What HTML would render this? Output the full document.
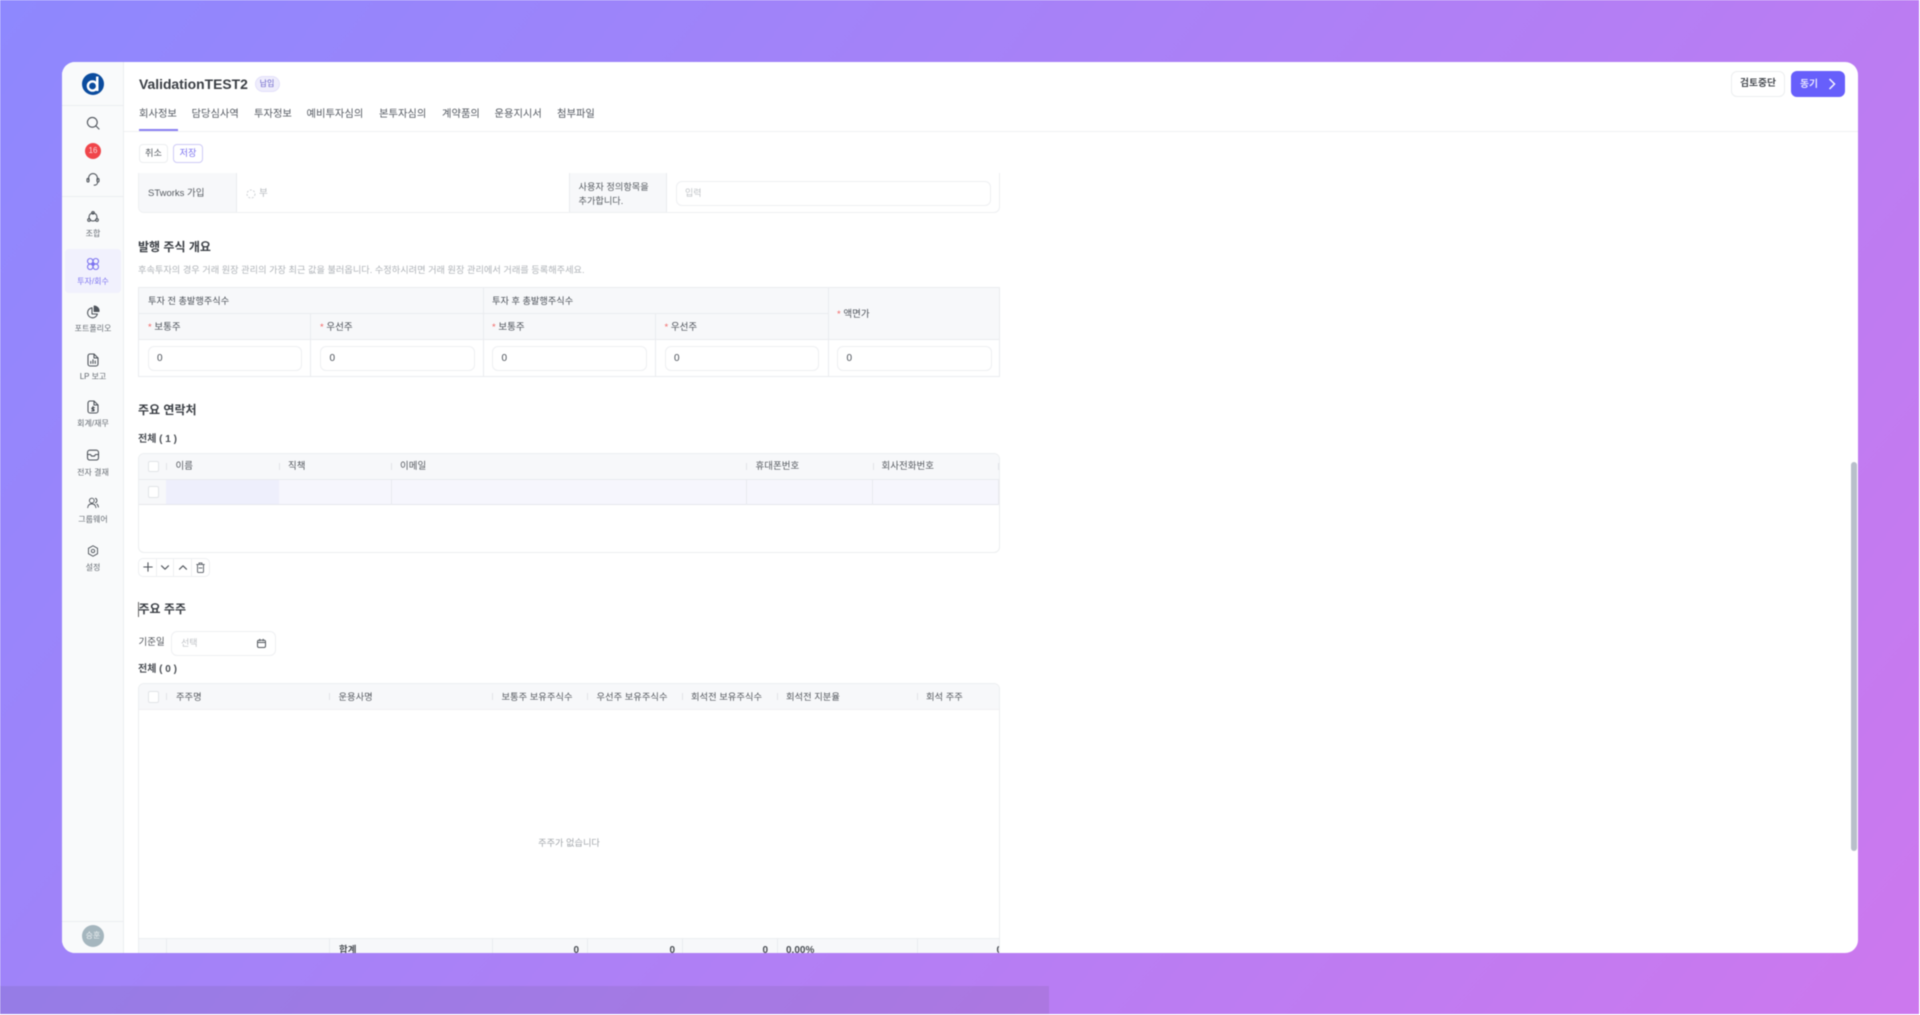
<!DOCTYPE html>
<html lang="ko"><head><meta charset="utf-8"><title>ValidationTEST2</title>
<style>
html,body{margin:0;padding:0;width:1920px;height:1015px;overflow:hidden;background:#fff}
*{box-sizing:border-box}
#bg{position:absolute;left:0;top:0;width:1919px;height:1014px;background:linear-gradient(127deg,#8e88fe,#cd78ee);overflow:hidden;filter:blur(.45px)}
#strip{position:absolute;left:0;top:986px;width:1049px;height:28px;background:rgba(70,70,70,.1)}
#card{position:absolute;left:62px;top:62px;width:1796px;height:891px;background:#fff;border-radius:13px;overflow:hidden}
#in{position:absolute;left:-62px;top:-62px;width:1920px;height:1015px;font-family:"Liberation Sans","Noto Sans CJK KR",sans-serif;color:#4b5058;font-size:9.5px}
.t{position:absolute;line-height:14px;white-space:nowrap;margin-top:1px}
.b{position:absolute}
.c{transform:translateX(-50%);text-align:center}
.side{font-size:8px;color:#62686f}
.tab{font-size:10.3px;top:107px;color:#555a62}
.h{font-weight:700;font-size:12px;color:#3a3e44}
.in{position:absolute;background:#fff;border:1px solid #eef0f2;border-radius:6px}
.red{color:#f26a6a}
svg{position:absolute;overflow:visible}
svg.i{fill:none;stroke:#4f545b;stroke-width:1.1;stroke-linecap:round;stroke-linejoin:round}
.sep{position:absolute;width:1px;height:7px;background:#e2e4e8}
.v{position:absolute;width:1px;background:#eaecef}
.hl{position:absolute;height:1px;background:#eaecef}
.ck{position:absolute;width:11.5px;height:11.5px;background:#fff;border:1px solid #e2e4e8;border-radius:2px}
.th{top:458.500px;color:#55595f}
.th2{top:689px;color:#55595f;font-size:9.3px}
.f{font-weight:700;color:#4a4e54;font-size:10px}
.s{font-size:9.2px}
</style></head><body>
<div id="bg">
<div id="strip"></div>
<div id="card"><div id="in">

<!-- sidebar -->
<div class="b" style="left:62px;top:62px;width:62px;height:891px;background:#f9fafb;border-right:1px solid #eceef0"></div>
<div class="hl" style="left:62px;top:105px;width:62px;background:#eceef0"></div>
<div class="hl" style="left:62px;top:196px;width:62px;background:#eceef0"></div>
<div class="hl" style="left:62px;top:921px;width:62px;background:#eceef0"></div>
<svg style="left:82px;top:73px" width="22" height="22" viewBox="0 0 22 22"><circle cx="11" cy="11" r="11" fill="#0b4c9e"/><circle cx="10.500" cy="13" r="4.600" fill="none" stroke="#fff" stroke-width="2.400"/><rect x="14" y="3.500" width="2.500" height="14.500" fill="#fff"/></svg>
<svg class="i" style="left:86px;top:116px" width="14" height="14" viewBox="0 0 14 14"><circle cx="6.300" cy="6.300" r="4.900"/><path d="M10 10l3 3"/></svg>
<div class="b" style="left:85px;top:143px;width:16px;height:16px;border-radius:8px;background:#f0454a;color:#fbd9da;font-size:8px;line-height:16px;text-align:center">16</div>
<svg class="i" style="left:86px;top:172px" width="14" height="14" viewBox="0 0 14 14"><path d="M2.600 8V6a4.400 4.400 0 0 1 8.800 0v2"/><rect x="1" y="6.400" width="2" height="3.600" rx="1"/><rect x="11" y="6.400" width="2" height="3.600" rx="1"/><path d="M11.600 10.200c0 1.800-1.400 3-3.400 3"/></svg>

<svg class="i" style="left:86px;top:210px" width="14" height="14" viewBox="0 0 14 14"><circle cx="7" cy="7" r="4"/><circle cx="7" cy="2.800" r="1.300"/><circle cx="3" cy="10" r="1.300"/><circle cx="11" cy="10" r="1.300"/></svg>
<div class="t side c" style="left:93px;top:225.500px">조합</div>

<div class="b" style="left:64.500px;top:249px;width:56.500px;height:44px;background:#f1f1fd;border-radius:4px"></div>
<svg class="i" style="left:86px;top:257px;stroke:#7d74f0" width="14" height="14" viewBox="0 0 14 14"><circle cx="4.200" cy="4.200" r="2.700"/><circle cx="9.800" cy="4.200" r="2.700"/><circle cx="4.200" cy="9.800" r="2.700"/><circle cx="9.800" cy="9.800" r="2.700"/><circle cx="7" cy="7" r="1.200" fill="#7d74f0"/></svg>
<div class="t side c" style="left:93px;top:273.500px;color:#7d74f0">투자/회수</div>

<svg class="i" style="left:86px;top:305px" width="14" height="14" viewBox="0 0 14 14"><path d="M6 2.800a5 5 0 1 0 5.400 6.200H6z"/><path d="M8.200 1a5 5 0 0 1 4.800 5.400H8.200z" fill="#4f545b"/></svg>
<div class="t side c" style="left:93px;top:320.500px">포트폴리오</div>

<svg class="i" style="left:87px;top:353px" width="12" height="14" viewBox="0 0 12 14"><path d="M1 3a2 2 0 0 1 2-2h4l4 4v6a2 2 0 0 1-2 2H3a2 2 0 0 1-2-2z"/><path d="M7 1v4h4M3.800 10.400V8.400M6 10.400V6.800M8.200 10.400V8"/></svg>
<div class="t side c" style="left:93px;top:369px">LP 보고</div>

<svg class="i" style="left:87px;top:400px" width="12" height="14" viewBox="0 0 12 14"><path d="M1 3a2 2 0 0 1 2-2h4l4 4v6a2 2 0 0 1-2 2H3a2 2 0 0 1-2-2z"/><path d="M7 1v4h4M6 6.500v4.500M7.400 7.600H5.400a.9.9 0 0 0 0 1.700h1.200a.9.9 0 0 1 0 1.700H4.600"/></svg>
<div class="t side c" style="left:93px;top:416px">회계/재무</div>

<svg class="i" style="left:86px;top:448px" width="14" height="14" viewBox="0 0 14 14"><rect x="1.500" y="2.200" width="11" height="9.800" rx="2.200"/><path d="M1.500 6.500h3l1 1.600h3l1-1.600h3"/></svg>
<div class="t side c" style="left:93px;top:464.500px">전자 결재</div>

<svg class="i" style="left:87px;top:497px" width="12" height="12" viewBox="0 0 14 14"><circle cx="5.600" cy="4.200" r="2.800"/><path d="M.8 12.400c.4-3 2.400-4.400 4.800-4.400s4.400 1.400 4.800 4.400M9.800 1.600a2.800 2.800 0 0 1 0 5.200M11.600 8.400c1 .6 1.500 2 1.700 3.400"/></svg>
<div class="t side c" style="left:93px;top:512px">그룹웨어</div>

<svg class="i" style="left:87px;top:545px" width="12" height="12" viewBox="0 0 14 14"><path d="M7 .9l5.300 3v6.200L7 13.100l-5.300-3V3.900z"/><circle cx="7" cy="7" r="2"/></svg>
<div class="t side c" style="left:93px;top:560px">설정</div>

<div class="b" style="left:82px;top:925px;width:22px;height:22px;border-radius:11px;background:#a5b6be;color:#eef2f4;font-size:8px;line-height:22px;text-align:center">승훈</div>

<!-- header -->
<div class="t" style="left:139px;top:75px;font-size:13.900px;font-weight:700;color:#3a3e44;line-height:16px">ValidationTEST2</div>
<div class="b" style="left:254.500px;top:76px;width:25px;height:15.500px;border-radius:8px;background:#efedfc;border:1px solid #e3e0fa;color:#6a63c8;font-size:8px;line-height:13.500px;text-align:center">납입</div>
<div class="t tab" style="left:139px">회사정보</div>
<div class="t tab" style="left:191.500px">담당심사역</div>
<div class="t tab" style="left:254px">투자정보</div>
<div class="t tab" style="left:306.500px">예비투자심의</div>
<div class="t tab" style="left:379px">본투자심의</div>
<div class="t tab" style="left:442px">계약품의</div>
<div class="t tab" style="left:494.500px">운용지시서</div>
<div class="t tab" style="left:557px">첨부파일</div>
<div class="b" style="left:138.500px;top:128.500px;width:39px;height:2px;background:#8a80f2"></div>
<div class="hl" style="left:124px;top:130.500px;width:1734px;background:#f0f1f3;height:1px"></div>

<div class="b" style="left:1731px;top:71px;width:54px;height:25.500px;border:1px solid #eceef0;border-radius:6px;background:#fff;text-align:center;line-height:23.500px;font-size:9.800px;font-weight:700;color:#484c52">검토중단</div>
<div class="b" style="left:1791px;top:71px;width:53.500px;height:25.500px;border-radius:6px;background:#675ffb"></div>
<div class="t" style="left:1800px;top:76.500px;color:#e6e4ff;font-size:9.800px;font-weight:700">동기</div>
<svg style="left:1828px;top:78px;fill:none;stroke:#f4f3ff;stroke-width:1.500" width="8" height="12" viewBox="0 0 8 12"><path d="M1.500 1l5 5-5 5"/></svg>

<!-- action buttons -->
<div class="b" style="left:139px;top:143.500px;width:29px;height:19px;border:1px solid #eceef0;border-radius:4px;text-align:center;line-height:17px;font-size:9.200px;color:#555a60">취소</div>
<div class="b" style="left:173px;top:143.500px;width:30px;height:19px;border:1px solid #cfcbf7;border-radius:4px;text-align:center;line-height:17px;font-size:9.200px;color:#7d74f0">저장</div>

<!-- STworks row -->
<div class="b" style="left:138px;top:173px;width:862px;height:40px;border:1px solid #eef0f2;border-top:0;border-radius:0 0 6px 6px;overflow:hidden">
 <div class="b" style="left:0;top:0;width:98px;height:39px;background:#f7f8fa;border-right:1px solid #eaecef"></div>
 <div class="b" style="left:430px;top:0;width:98px;height:39px;background:#f7f8fa;border-left:1px solid #eaecef;border-right:1px solid #eaecef"></div>
</div>
<div class="t" style="left:148px;top:186px;color:#555a60">STworks 가입</div>
<svg style="left:246px;top:188.500px;fill:none;stroke:#cfd2d6;stroke-width:1;stroke-dasharray:2 1.500" width="10" height="10" viewBox="0 0 10 10"><circle cx="5" cy="5" r="4"/></svg>
<div class="t" style="left:259px;top:186px;color:#b4b8bd">부</div>
<div class="t s" style="left:578.500px;top:178.500px;color:#555a60">사용자 정의항목을</div>
<div class="t s" style="left:578.500px;top:192.500px;color:#555a60">추가합니다.</div>
<div class="in" style="left:676px;top:181px;width:315px;height:25px;padding-left:8px;line-height:23px;color:#bfc2c6;font-size:9px">입력</div>

<!-- 발행 주식 개요 -->
<div class="t h" style="left:138px;top:238.500px">발행 주식 개요</div>
<div class="t s" style="left:138px;top:261.500px;color:#aeb2b7">후속투자의 경우 거래 원장 관리의 가장 최근 값을 불러옵니다. 수정하시려면 거래 원장 관리에서 거래를 등록해주세요.</div>

<div class="b" style="left:138px;top:287px;width:862px;height:90px;border:1px solid #eaecef"></div>
<div class="b" style="left:139px;top:288px;width:860px;height:52px;background:#f7f8fa"></div>
<div class="hl" style="left:139px;top:313px;width:689px"></div>
<div class="hl" style="left:139px;top:339px;width:860px"></div>
<div class="v" style="left:310px;top:314px;height:63px"></div>
<div class="v" style="left:483px;top:287px;height:90px"></div>
<div class="v" style="left:655px;top:314px;height:63px"></div>
<div class="v" style="left:828px;top:287px;height:90px"></div>
<div class="t s" style="left:148px;top:293px">투자 전 총발행주식수</div>
<div class="t s" style="left:492px;top:293px">투자 후 총발행주식수</div>
<div class="t" style="left:148px;top:319.500px"><span class="red">*</span> 보통주</div>
<div class="t" style="left:320px;top:319.500px"><span class="red">*</span> 우선주</div>
<div class="t" style="left:492px;top:319.500px"><span class="red">*</span> 보통주</div>
<div class="t" style="left:664.500px;top:319.500px"><span class="red">*</span> 우선주</div>
<div class="t" style="left:837px;top:306.500px"><span class="red">*</span> 액면가</div>
<div class="in" style="left:147.500px;top:346px;width:154px;height:25px;padding-left:8.500px;line-height:23px;font-size:10px">0</div>
<div class="in" style="left:320px;top:346px;width:154.500px;height:25px;padding-left:8.500px;line-height:23px;font-size:10px">0</div>
<div class="in" style="left:492px;top:346px;width:154.500px;height:25px;padding-left:8.500px;line-height:23px;font-size:10px">0</div>
<div class="in" style="left:664.500px;top:346px;width:154.500px;height:25px;padding-left:8.500px;line-height:23px;font-size:10px">0</div>
<div class="in" style="left:837px;top:346px;width:154.500px;height:25px;padding-left:8.500px;line-height:23px;font-size:10px">0</div>

<!-- 주요 연락처 -->
<div class="t h" style="left:138px;top:402px">주요 연락처</div>
<div class="t f" style="left:138px;top:431.500px">전체 ( 1 )</div>

<div class="b" style="left:138px;top:453px;width:862px;height:100px;border:1px solid #eceef0;border-radius:6px;overflow:hidden">
  <div class="b" style="left:0;top:0;width:860px;height:25.500px;background:#f7f8fa;border-bottom:1px solid #e9ebee"></div>
  <div class="b" style="left:0;top:25.500px;width:860px;height:25.500px;background:#f6f6fd;border-bottom:1px solid #e6e7ec"></div>
  <div class="b" style="left:0;top:25.500px;width:27px;height:24.500px;background:#f7f8fa"></div>
  <div class="b" style="left:27px;top:25.500px;width:113px;height:24.500px;background:#eeeffc"></div>
  <div class="v" style="left:252px;top:25.500px;height:25px;background:#e9eaf0"></div>
  <div class="v" style="left:607px;top:25.500px;height:25px;background:#e9eaf0"></div>
  <div class="v" style="left:733px;top:25.500px;height:25px;background:#e9eaf0"></div>
  <div class="v" style="left:859px;top:25.500px;height:25px;background:#e9eaf0"></div>
</div>
<div class="ck" style="left:147.500px;top:460.500px"></div>
<div class="ck" style="left:147.500px;top:486px"></div>
<div class="sep" style="left:166px;top:463px"></div>
<div class="sep" style="left:278.500px;top:463px"></div>
<div class="sep" style="left:391px;top:463px"></div>
<div class="sep" style="left:746px;top:463px"></div>
<div class="sep" style="left:872.500px;top:463px"></div>
<div class="sep" style="left:998px;top:463px"></div>
<div class="t th" style="left:175.500px">이름</div>
<div class="t th" style="left:288px">직책</div>
<div class="t th" style="left:400px">이메일</div>
<div class="t th" style="left:755.500px">휴대폰번호</div>
<div class="t th" style="left:881.500px">회사전화번호</div>

<div class="b" style="left:138px;top:558px;width:71.500px;height:18.500px;border:1px solid #eef0f2;border-radius:5px"></div>
<div class="v" style="left:156px;top:558px;height:18.500px;background:#eef0f2"></div>
<div class="v" style="left:173px;top:558px;height:18.500px;background:#eef0f2"></div>
<div class="v" style="left:191px;top:558px;height:18.500px;background:#eef0f2"></div>
<svg class="i" style="left:142.500px;top:562px" width="10" height="10" viewBox="0 0 10 10"><path d="M5 .8v8.400M.8 5h8.400"/></svg>
<svg class="i" style="left:161px;top:563.500px" width="8" height="7" viewBox="0 0 8 7"><path d="M.5 1.800L4 5.200l3.500-3.400"/></svg>
<svg class="i" style="left:178.500px;top:563.500px" width="8" height="7" viewBox="0 0 8 7"><path d="M.5 5.200L4 1.800l3.500 3.400"/></svg>
<svg class="i" style="left:196px;top:561.500px;stroke:#666b72;stroke-width:1" width="9" height="11" viewBox="0 0 9 11"><path d="M.7 2.500h7.600M3 2.500V1h3v1.500M1.500 2.500v7a1 1 0 0 0 1 1h4a1 1 0 0 0 1-1v-7M3 6h3"/></svg>

<!-- 주요 주주 -->
<div class="b" style="left:138px;top:602px;width:1px;height:15px;background:#666"></div>
<div class="t h" style="left:138.500px;top:601px">주요 주주</div>
<div class="t" style="left:138.500px;top:634.500px;color:#4e5258">기준일</div>
<div class="in" style="left:171px;top:631px;width:104.500px;height:24.500px;padding-left:9px;line-height:23px;color:#bfc2c6;font-size:9px">선택</div>
<svg class="i" style="left:257px;top:639px;stroke:#555a60;stroke-width:1" width="9" height="9" viewBox="0 0 9 9"><rect x=".5" y="1.200" width="8" height="7.300" rx="1.500"/><path d="M.5 3.500h8M2.800.3v1.400M6.200.3v1.400"/></svg>
<div class="t f" style="left:138px;top:662px">전체 ( 0 )</div>

<div class="b" style="left:138px;top:683px;width:862px;height:280px;border:1px solid #eceef0;border-radius:6px 6px 0 0;overflow:hidden">
  <div class="b" style="left:0;top:0;width:860px;height:26px;background:#f7f8fa;border-bottom:1px solid #f0f1f3"></div>
  <div class="b" style="left:0;top:254px;width:860px;height:20px;background:#f7f8fa;border-top:1px solid #eceef0"></div>
  <div class="v" style="left:27px;top:254px;height:20px"></div>
  <div class="v" style="left:190px;top:254px;height:20px"></div>
  <div class="v" style="left:353px;top:254px;height:20px"></div>
  <div class="v" style="left:448px;top:254px;height:20px"></div>
  <div class="v" style="left:543px;top:254px;height:20px"></div>
  <div class="v" style="left:638px;top:254px;height:20px"></div>
  <div class="v" style="left:778px;top:254px;height:20px"></div>
  <div class="t f" style="left:200px;top:258.500px;font-size:9.500px">합계</div>
  <div class="t f" style="left:340px;top:258.500px;width:100px;text-align:right">0</div>
  <div class="t f" style="left:436px;top:258.500px;width:100px;text-align:right">0</div>
  <div class="t f" style="left:529px;top:258.500px;width:100px;text-align:right">0</div>
  <div class="t f" style="left:647px;top:258.500px">0.00%</div>
  <div class="t f" style="left:857.500px;top:258.500px">0</div>
</div>
<div class="ck" style="left:147.500px;top:691px"></div>
<div class="sep" style="left:166px;top:693px"></div>
<div class="sep" style="left:329px;top:693px"></div>
<div class="sep" style="left:491.500px;top:693px"></div>
<div class="sep" style="left:586.500px;top:693px"></div>
<div class="sep" style="left:681.500px;top:693px"></div>
<div class="sep" style="left:776.500px;top:693px"></div>
<div class="sep" style="left:916.500px;top:693px"></div>
<div class="t th2" style="left:176px">주주명</div>
<div class="t th2" style="left:338.500px">운용사명</div>
<div class="t th2" style="left:501.500px">보통주 보유주식수</div>
<div class="t th2" style="left:596.500px">우선주 보유주식수</div>
<div class="t th2" style="left:691px">회석전 보유주식수</div>
<div class="t th2" style="left:786px">회석전 지분율</div>
<div class="t th2" style="left:926px">회석 주주</div>
<div class="t c s" style="left:569px;top:834.500px;color:#a2a6ab">주주가 없습니다</div>

<!-- scrollbar -->
<div class="b" style="left:1851px;top:462px;width:6px;height:389px;border-radius:3px;background:#b8bfca"></div>

</div></div>
</div>
</body></html>
